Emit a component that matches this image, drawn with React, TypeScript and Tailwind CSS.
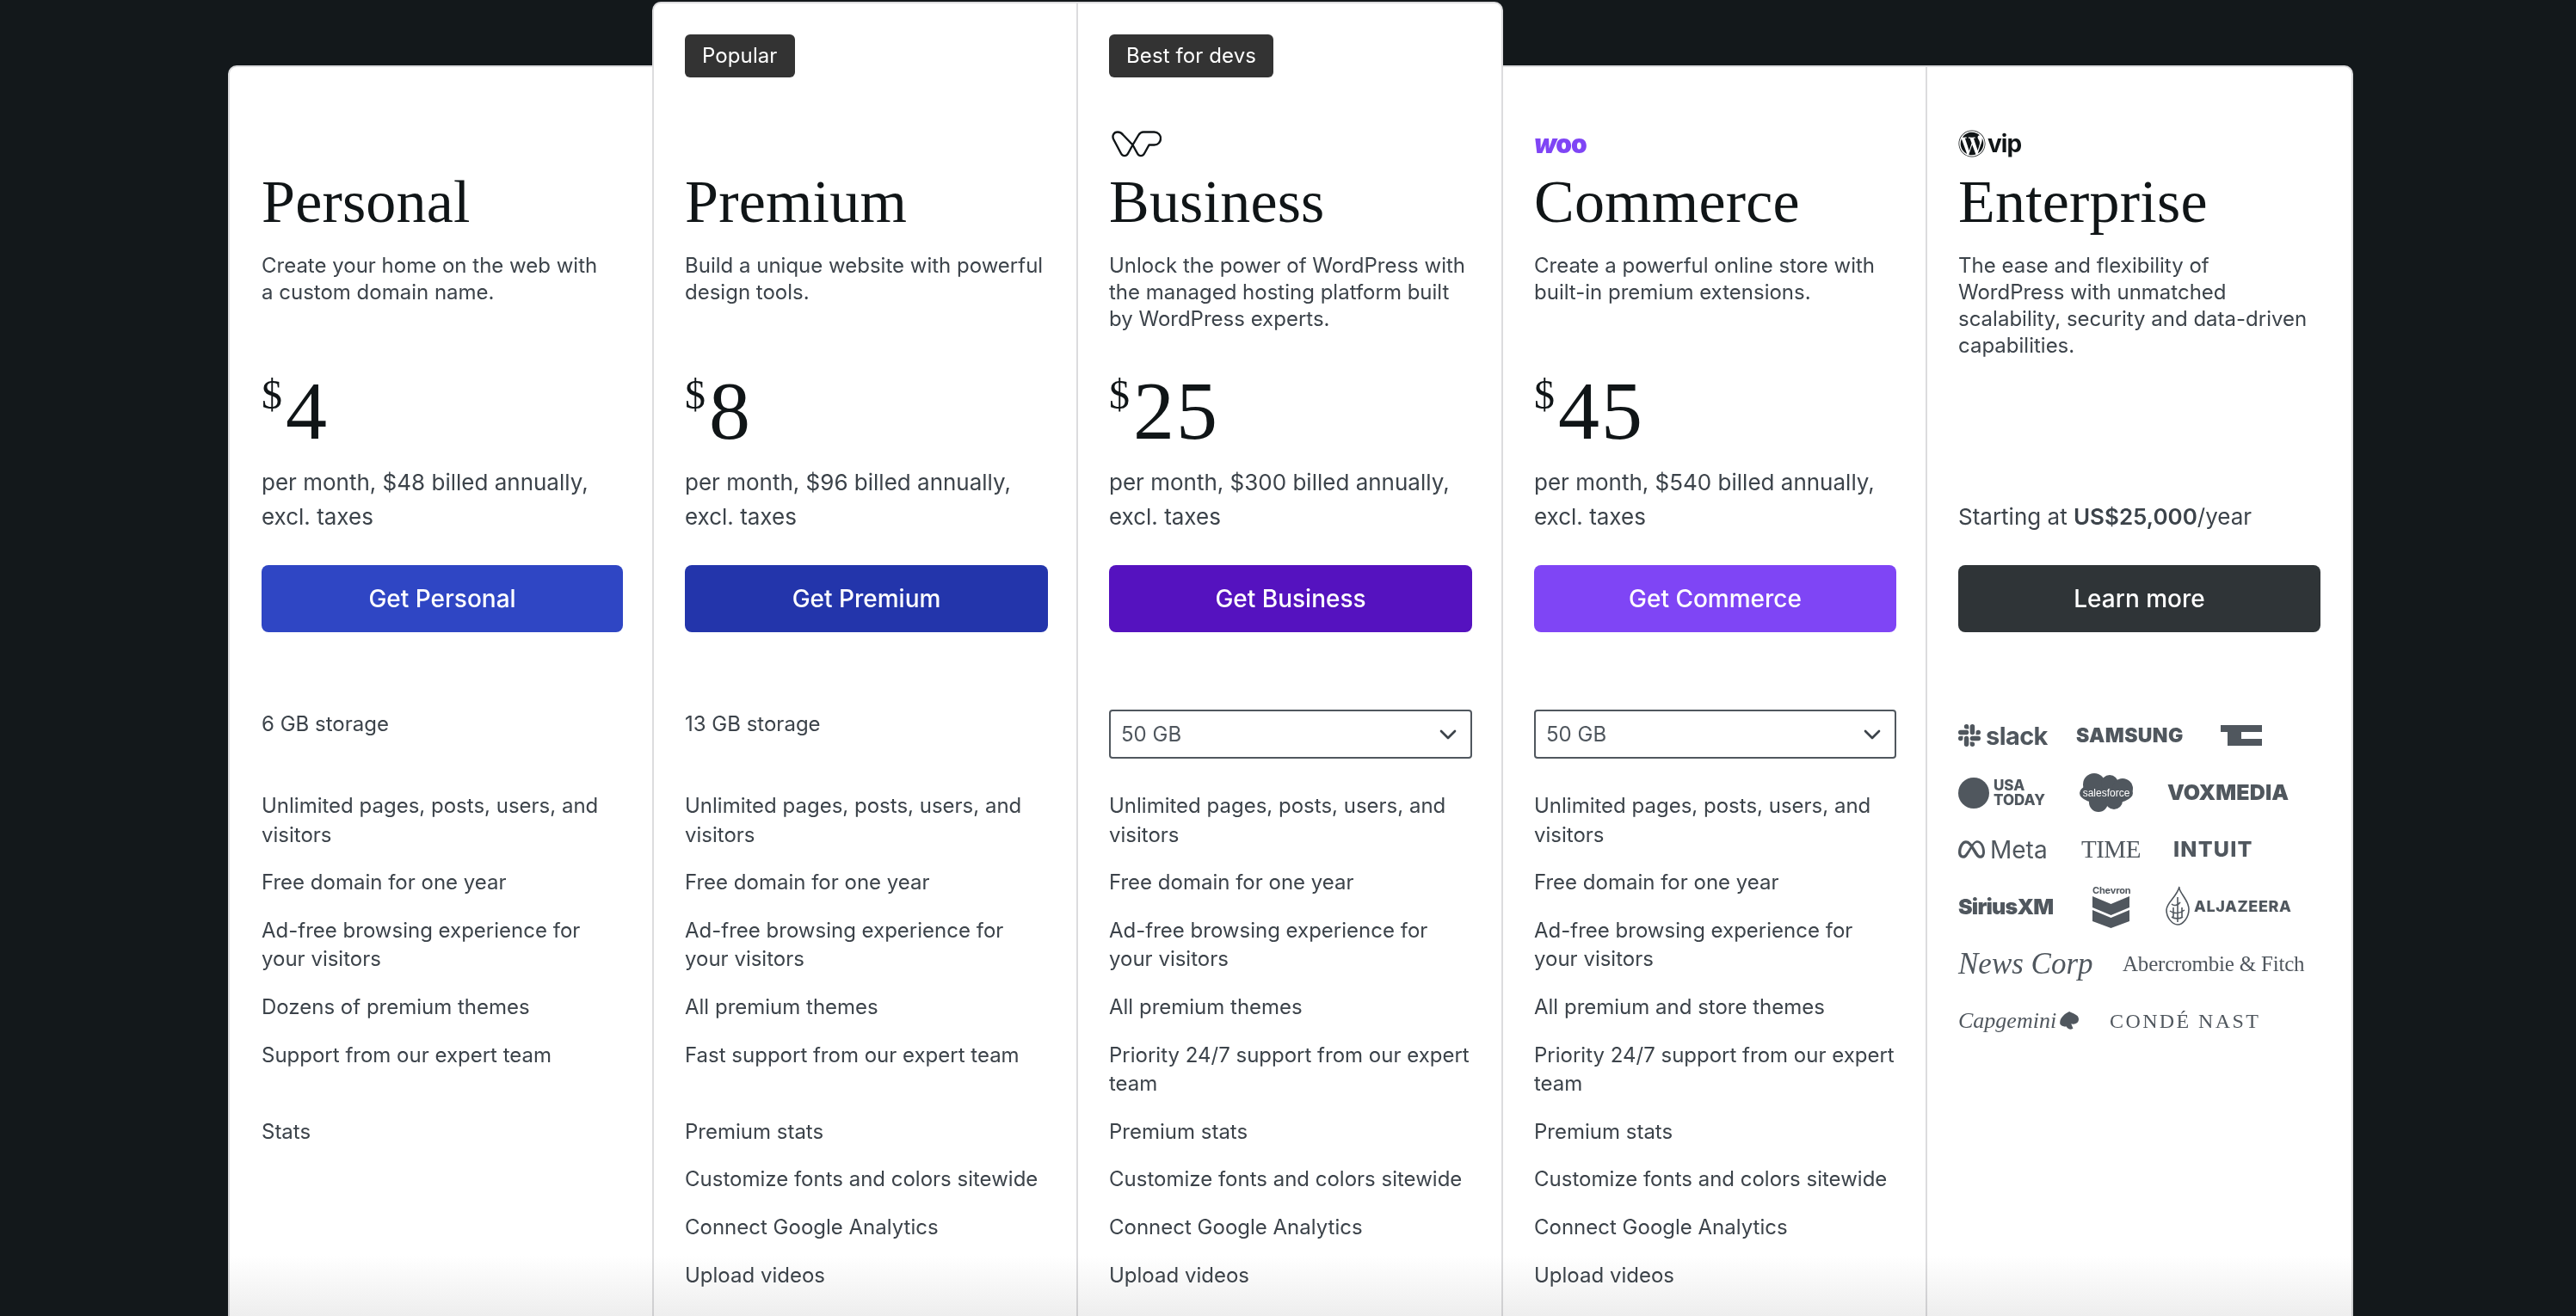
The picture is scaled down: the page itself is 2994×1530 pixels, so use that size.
import { ChevronDown } from 'lucide-react';
import { FaWordpress } from 'react-icons/fa';
import { SiMeta, SiSlack } from 'react-icons/si';

const serif = 'font-["Liberation_Serif",serif]';

type Plan = {
  name: string;
  blurb: string;
  price: string;
  billed: string;
  cta: string;
  ctaClass: string;
  colClass: string;
  badge?: string;
  logo?: 'wp' | 'woo';
  storage?: string;
  features: string[];
};

const plans: Plan[] = [
  {
    name: 'Personal',
    blurb: 'Create your home on the web with\na custom domain name.',
    price: '4',
    billed: 'per month, $48 billed annually, excl. taxes',
    cta: 'Get Personal',
    ctaClass: 'bg-[#2f46c4]',
    colClass: 'mt-[74px] rounded-tl-[10px] border-t-2 border-l-2 pt-[72px] pr-[34px] pl-[37px]',
    storage: '6 GB storage',
    features: [
      'Unlimited pages, posts, users, and visitors',
      'Free domain for one year',
      'Ad-free browsing experience for your visitors',
      'Dozens of premium themes',
      'Support from our expert team',
      'Stats',
    ],
  },
  {
    name: 'Premium',
    blurb: 'Build a unique website with powerful design tools.',
    price: '8',
    billed: 'per month, $96 billed annually, excl. taxes',
    cta: 'Get Premium',
    ctaClass: 'bg-[#2335ab]',
    colClass: 'relative z-10 -mr-[2px] rounded-tl-[10px] border-x-2 border-t-2 pt-[36px] pr-[33px] pl-[36px]',
    badge: 'Popular',
    storage: '13 GB storage',
    features: [
      'Unlimited pages, posts, users, and visitors',
      'Free domain for one year',
      'Ad-free browsing experience for your visitors',
      'All premium themes',
      'Fast support from our expert team',
      'Premium stats',
      'Customize fonts and colors sitewide',
      'Connect Google Analytics',
      'Upload videos',
    ],
  },
  {
    name: 'Business',
    blurb: 'Unlock the power of WordPress with the managed hosting platform built by WordPress experts.',
    price: '25',
    billed: 'per month, $300 billed annually, excl. taxes',
    cta: 'Get Business',
    ctaClass: 'bg-[#5512bf]',
    colClass: 'relative z-10 -mr-[2px] rounded-tr-[10px] border-x-2 border-t-2 pt-[36px] pr-[34px] pl-[36px]',
    badge: 'Best for devs',
    logo: 'wp',
    features: [
      'Unlimited pages, posts, users, and visitors',
      'Free domain for one year',
      'Ad-free browsing experience for your visitors',
      'All premium themes',
      'Priority 24/7 support from our expert team',
      'Premium stats',
      'Customize fonts and colors sitewide',
      'Connect Google Analytics',
      'Upload videos',
    ],
  },
  {
    name: 'Commerce',
    blurb: 'Create a powerful online store with built-in premium extensions.',
    price: '45',
    billed: 'per month, $540 billed annually, excl. taxes',
    cta: 'Get Commerce',
    ctaClass: 'bg-[#7f45f5]',
    colClass: 'mt-[74px] border-t-2 pt-[72px] pr-[34px] pl-[38px]',
    logo: 'woo',
    features: [
      'Unlimited pages, posts, users, and visitors',
      'Free domain for one year',
      'Ad-free browsing experience for your visitors',
      'All premium and store themes',
      'Priority 24/7 support from our expert team',
      'Premium stats',
      'Customize fonts and colors sitewide',
      'Connect Google Analytics',
      'Upload videos',
    ],
  },
];

function WpLogo() {
  return (
    <svg width="58" height="31" viewBox="0 0 58 31" fill="none" stroke="#101517" strokeWidth="2.400" strokeLinejoin="round" className="ml-[3px]">
      <path d="M7 1.500C2.500 1.500 0 6 2.500 10.500L11 26.500C13 30 17 30 19 26.500L24.500 16.500 30 26.500C32 30 36 30 38 26.500L43.500 16.500H49.500C54 16.500 57 13 57 9S54 1.500 49.500 1.500H37C34 1.500 32.500 3 31 5.500L24.500 16.500 13.500 5C12 3 10 1.500 7 1.500Z" />
    </svg>
  );
}

function VipLogo() {
  return (
    <div className="flex h-[32px] items-center">
      <FaWordpress size={32} color="#101517" />
      <span className="ml-[2px] text-[28px] leading-none font-bold tracking-[-1px] text-[#101517]">vip</span>
    </div>
  );
}

function LogoSlot({ logo }: { logo?: Plan['logo'] }) {
  return (
    <div className="flex h-[34px] items-center">
      {logo === 'wp' && <WpLogo />}
      {logo === 'woo' && (
        <span className="text-[30px] leading-none font-black tracking-[-1px] text-[#7f45f5]">
          <i>w</i>oo
        </span>
      )}
    </div>
  );
}

function Price({ value }: { value: string }) {
  return (
    <div className={`flex h-[120px] items-start text-[#101517] ${serif}`}>
      <span className="mt-[10px] text-[48px] leading-[56px]">$</span>
      <span className="mt-[9px] ml-[4px] text-[96px] leading-[96px] tracking-[2px]">{value}</span>
    </div>
  );
}

function Column({ plan }: { plan: Plan }) {
  return (
    <div className={`border-[#dcdcde] bg-white ${plan.colClass}`}>
      {plan.badge && (
        <div className="mb-[60px] flex h-[50px]">
          <span className="rounded-[6px] bg-[#333333] px-[20px] text-[24px] leading-[50px] tracking-[0.1px] text-white">{plan.badge}</span>
        </div>
      )}
      <LogoSlot logo={plan.logo} />
      <h2 className={`mt-[11px] h-[80px] text-[70px] leading-[80px] tracking-[0.2px] text-[#101517] ${serif}`}>{plan.name}</h2>
      <p className="mt-[18px] h-[128px] text-[24px] leading-[31px] whitespace-pre-line text-[#3c434a]">{plan.blurb}</p>
      <Price value={plan.price} />
      <p className="h-[80px] text-[26px] leading-[40px] text-[#3c434a]">{plan.billed}</p>
      <button className={`mt-[36px] block h-[78px] w-full rounded-[8px] text-[28px] font-medium text-white ${plan.ctaClass}`}>{plan.cta}</button>
      <div className="mt-[90px] h-[57px]">
        {plan.storage ? (
          <p className="text-[24px] leading-[33.6px] text-[#3c434a]">{plan.storage}</p>
        ) : (
          <div className="flex h-[57px] items-center justify-between rounded-[4px] border-2 border-[#50575e] pr-[10px] pl-[12px] text-[24px] text-[#50575e]">
            50 GB
            <ChevronDown size={32} strokeWidth={2} className="text-[#3c434a]" />
          </div>
        )}
      </div>
      <ul className="mt-[38px] flex flex-col gap-[22px] text-[24px] leading-[33.6px] text-[#3c434a]">
        {plan.features.map((f, i) => (
          <li key={f} className={i === 4 ? 'min-h-[67.2px]' : ''}>{f}</li>
        ))}
      </ul>
    </div>
  );
}

// client logos in the enterprise column, one row = 66.4px
function ClientLogos() {
  const c = 'leading-none whitespace-nowrap';
  const row = 'flex h-[66.4px] items-center';
  return (
    <div className="flex flex-col text-[#50575e]">
      <div className={row}>
        <div className="flex w-[137px] items-center gap-[6px]">
          <SiSlack size={26} color="#50575e" />
          <span className={`${c} text-[29px] font-bold tracking-[-0.6px]`}>slack</span>
        </div>
        <span className={`${c} w-[168px] text-[23px] font-black tracking-[0.4px]`}>SAMSUNG</span>
        <svg width="48" height="24" viewBox="0 0 48 24" fill="#50575e">
          <path d="M0 0h24v8h-8v16H8V8H0V0Zm24 0h24v8H24V0Zm-8 8h8v8h24v8H16V8Z" />
        </svg>
      </div>

      <div className={row}>
        <div className="flex w-[140px] items-center gap-[5px]">
          <span className="h-[36px] w-[36px] rounded-full bg-[#50575e]" />
          <span className={`${c} text-[17px] leading-[15px] font-extrabold`}>USA<br />TODAY</span>
        </div>
        <div className="relative flex h-[45px] w-[64px] items-center justify-center">
          <svg width="64" height="45" viewBox="0 0 64 45" fill="#50575e" className="absolute inset-0">
            <ellipse cx="32" cy="23" rx="31" ry="13" />
            <circle cx="18" cy="13" r="13" />
            <circle cx="36" cy="12" r="10" />
            <circle cx="51" cy="18" r="12" />
            <circle cx="23" cy="34" r="11" />
            <circle cx="41" cy="32" r="10" />
          </svg>
          <span className='relative font-["Liberation_Sans",sans-serif] text-[12px] leading-none text-white'>salesforce</span>
        </div>
        <span className={`${c} ml-[39px] text-[25px] font-black tracking-[0.1px]`}>VOXMEDIA</span>
      </div>

      <div className={row}>
        <div className="flex w-[143px] items-center gap-[6px]">
          <SiMeta size={31} color="#50575e" />
          <span className={`${c} text-[28px] font-normal`}>Meta</span>
        </div>
        <span className={`${c} w-[107px] font-["Liberation_Serif",serif] text-[29px] tracking-[-0.5px]`}>TIME</span>
        <span className={`${c} text-[25px] font-extrabold tracking-[1.2px]`}>INTUIT</span>
      </div>

      <div className={row}>
        <span className={`${c} w-[156px] text-[25px] font-black tracking-[-0.8px]`}>SiriusXM</span>
        <div className="flex w-[85px] flex-col items-start">
          <span className={`${c} text-[11px] font-bold tracking-[-0.2px]`}>Chevron</span>
          <svg width="43" height="37" viewBox="0 0 43 37" fill="#50575e" className="mt-[1px]">
            <path d="M0 0 21.500 9 43 0v13L21.500 22 0 13V0Zm0 16 21.500 9L43 16v13l-21.500 8L0 29V16Z" />
          </svg>
        </div>
        <div className="flex items-center gap-[5px]">
          <svg width="28" height="48" viewBox="0 0 28 48" fill="none" stroke="#50575e" strokeWidth="1.600">
            <path d="M16 1c-2 5 11 15 11 26 0 10-7 18-13 18S1 37 1 28C1 19 13 13 16 1Z" />
            <path d="M7 21c3 3 8 1 10-2M5 29c5 4 12 3 17-1M7 36c3 2 9 3 13 0M14 13v29M9 25v11M19 25v11" />
          </svg>
          <span className={`${c} text-[18px] font-extrabold tracking-[0.6px]`}>ALJAZEERA</span>
        </div>
      </div>

      <div className={row}>
        <span className={`${c} w-[191px] font-["Liberation_Serif",serif] text-[35px] italic`}>News Corp</span>
        <span className={`${c} font-["Liberation_Serif",serif] text-[25px] tracking-[-0.2px]`}>Abercrombie &amp; Fitch</span>
      </div>

      <div className={row}>
        <div className="flex w-[176px] items-center gap-[2px]">
          <span className={`${c} font-["Liberation_Serif",serif] text-[26px] italic`}>Capgemini</span>
          <svg width="24" height="22" viewBox="0 0 22 20" fill="#50575e">
            <path d="M2 12C2 6 8 2 12 0c3 2 10 3 10 8 0 5-5 6-8 5l2 5c-4 2-6 0-7-2-3 0-7-1-7-4Z" />
          </svg>
        </div>
        <span className={`${c} font-["Liberation_Serif",serif] text-[24px] tracking-[2.4px]`}>CONDÉ NAST</span>
      </div>
    </div>
  );
}

function EnterpriseColumn() {
  return (
    <div className="mt-[74px] rounded-tr-[10px] border-x-2 border-t-2 border-[#dcdcde] bg-white px-[36px] pt-[72px]">
      <div className="flex h-[34px] items-center">
        <VipLogo />
      </div>
      <h2 className={`mt-[11px] h-[80px] text-[70px] leading-[80px] tracking-[0.2px] text-[#101517] ${serif}`}>Enterprise</h2>
      <p className="mt-[18px] h-[128px] text-[24px] leading-[31px] text-[#3c434a]">
        The ease and flexibility of WordPress with unmatched scalability, security and data-driven capabilities.
      </p>
      <div className="h-[120px]" />
      <p className="flex h-[80px] items-end text-[26px] leading-[40px] text-[#3c434a]">
        <span>Starting at <strong className="font-semibold">US$25,000</strong>/year</span>
      </p>
      <button className="mt-[36px] block h-[78px] w-full rounded-[8px] bg-[#2f3437] text-[28px] font-medium text-white">Learn more</button>
      <div className="mt-[87px]">
        <ClientLogos />
      </div>
    </div>
  );
}

export default function App() {
  return (
    <div className='relative h-screen overflow-hidden bg-[#13181b] font-["Inter",sans-serif]'>
      <div className="mr-[259px] ml-[265px] grid h-full grid-cols-[493px_493px_494px_493px_1fr] pt-[2px]">
        {plans.map((p) => (
          <Column key={p.name} plan={p} />
        ))}
        <EnterpriseColumn />
      </div>
      <div className="pointer-events-none absolute right-[259px] bottom-0 left-[265px] z-20 h-[70px] bg-gradient-to-b from-white to-[#eeeeee] mix-blend-multiply" />
    </div>
  );
}
